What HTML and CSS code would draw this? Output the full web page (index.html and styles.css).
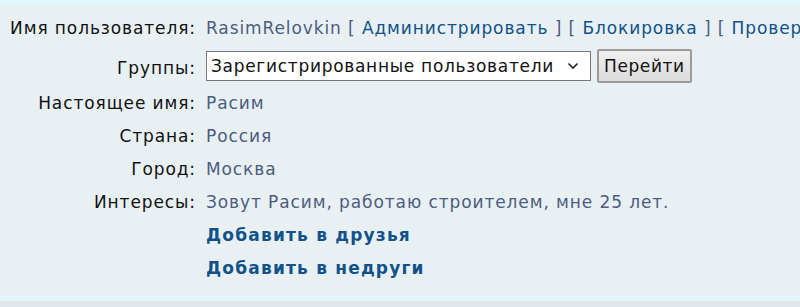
FILE: index.html
```html
<!DOCTYPE html>
<html lang="ru">
<head>
    <meta charset="UTF-8">
    <title>Профиль пользователя</title>
    <link rel="stylesheet" href="styles.css">
</head>
<body>
    <div class="topline"></div>
    <div class="panel">
        <dl class="profile">
            <dt>Имя пользователя:</dt>
            <dd class="nowrap">
                <span class="value">RasimRelovkin</span>
                <span class="bracket">[</span> <a href="#" class="admin">Администрировать</a> <span class="bracket">]</span>
                <span class="bracket">[</span> <a href="#" class="admin">Блокировка</a> <span class="bracket">]</span>
                <span class="bracket">[</span> <a href="#" class="admin">Проверить</a> <span class="bracket">]</span>
            </dd>

            <dt class="mid">Группы:</dt>
            <dd class="controls">
                <div class="select">
                    <span>Зарегистрированные пользователи</span>
                    <svg width="12" height="8" viewBox="0 0 12 8"><path d="M1.5 1.5 L6 6 L10.5 1.5" fill="none" stroke="#222" stroke-width="1.6"/></svg>
                </div>
                <button class="go">Перейти</button>
            </dd>

            <dt>Настоящее имя:</dt>
            <dd><span class="value">Расим</span></dd>

            <dt>Страна:</dt>
            <dd><span class="value">Россия</span></dd>

            <dt>Город:</dt>
            <dd><span class="value">Москва</span></dd>

            <dt>Интересы:</dt>
            <dd><span class="value">Зовут Расим, работаю строителем, мне 25 лет.</span></dd>

            <dt></dt>
            <dd><a href="#" class="action">Добавить в друзья</a></dd>

            <dt></dt>
            <dd><a href="#" class="action">Добавить в недруги</a></dd>
        </dl>
    </div>
    <div class="bottomline"></div>
    <div class="below"></div>
</body>
</html>
```

FILE: styles.css
```css
body {
    margin: 0;
    background: #e1e9ee;
    font-family: "DejaVu Sans", Verdana, sans-serif;
    font-size: 17px;
    letter-spacing: 0.9px;
    color: #111;
    overflow: hidden;
}
.topline {
    height: 6px;
    background: #e3f6fd;
}
.bottomline {
    height: 5px;
    background: #e3f6fd;
}
.below {
    height: 10px;
    background: #e0e8ed;
}
.panel {
    background: #e9f0f4;
    padding: 6px 0 8px;
    height: 290px;
    box-sizing: border-box;
}
.profile {
    display: grid;
    grid-template-columns: 196px 1fr;
    column-gap: 10px;
    margin: 0;
}
.profile dt,
.profile dd {
    margin: 0;
    line-height: 19px;
    padding: 7px 0;
}
.profile dt {
    text-align: right;
    white-space: nowrap;
}
.profile dt.mid {
    padding-top: 14px;
}
.nowrap {
    white-space: nowrap;
}
.value {
    color: #4c5c80;
}
.bracket {
    color: #4c5c80;
}
.admin {
    color: #105289;
    text-decoration: none;
}
.action {
    color: #105289;
    font-weight: bold;
    letter-spacing: 1.2px;
    text-decoration: none;
}
.controls {
    display: flex;
    align-items: center;
    gap: 6px;
    padding: 4px 0 !important;
}
.select {
    display: flex;
    align-items: center;
    justify-content: space-between;
    width: 385px;
    height: 30px;
    box-sizing: border-box;
    padding: 0 11px 0 4px;
    background: #fff;
    border: 1px solid #777;
    letter-spacing: 0.7px;
}
.go {
    font-family: inherit;
    font-size: 17px;
    letter-spacing: 0.6px;
    height: 34px;
    padding: 0 5px;
    color: #111;
    background: linear-gradient(#efefef, #dcdcdc);
    border: 2px solid #9a9a9a;
    border-radius: 2px;
}
```
